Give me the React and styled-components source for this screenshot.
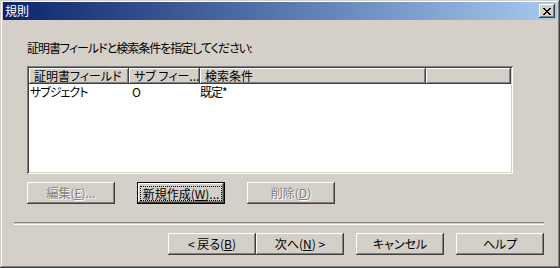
import styled, { createGlobalStyle } from "styled-components";

const GlobalStyle = createGlobalStyle`
  html, body {
    margin: 0;
    padding: 0;
    background: #d4d0c8;
  }
  body {
    font-family: "Noto Sans CJK JP", "Noto Sans", sans-serif;
    font-size: 12px;
    font-feature-settings: "palt";
  }
`;

const raised = `
  box-shadow: inset -1px -1px #404040, inset 1px 1px #ffffff,
    inset -2px -2px #808080, inset 2px 2px #d4d0c8;
`;

const Window = styled.div`
  width: 560px;
  height: 268px;
  box-sizing: border-box;
  padding: 2px 3px 3px 3px;
  background: #d4d0c8;
  box-shadow: inset -1px -1px #404040, inset 1px 1px #d4d0c8,
    inset -2px -2px #808080, inset 2px 2px #ffffff;
  display: flex;
  flex-direction: column;
  color: #000;
`;

const TitleBar = styled.div`
  height: 18px;
  display: flex;
  align-items: center;
  justify-content: space-between;
  padding: 0 2px 0 2px;
  background: linear-gradient(to right, #0a246a, #a6caf0);
  color: #fff;
  line-height: 18px;
`;

const CloseBox = styled.div`
  width: 16px;
  height: 14px;
  background: #d4d0c8;
  display: flex;
  align-items: center;
  justify-content: center;
  ${raised}
`;

const Content = styled.div`
  padding: 21px 13px 0 11px;
  display: flex;
  flex-direction: column;
`;

const Section = styled.div`
  padding-left: 13px;
  display: flex;
  flex-direction: column;
`;

const Label = styled.div`
  line-height: 14px;
  height: 14px;
  letter-spacing: -1px;
`;

const ListView = styled.div`
  margin-top: 11px;
  width: 486px;
  height: 108px;
  box-sizing: border-box;
  padding: 2px;
  background: #fff;
  box-shadow: inset 1px 1px #808080, inset -1px -1px #ffffff,
    inset 2px 2px #404040, inset -2px -2px #d4d0c8;
`;

const HeaderRow = styled.div`
  display: flex;
  height: 16px;
`;

const HeaderCell = styled.div`
  width: ${(p) => p.$w}px;
  flex: none;
  box-sizing: border-box;
  height: 16px;
  line-height: 16px;
  padding-left: 5px;
  background: #d4d0c8;
  white-space: nowrap;
  ${raised}
`;

const Row = styled.div`
  display: flex;
  height: 14px;
  line-height: 14px;
  margin-top: 1px;
`;

const Cell = styled.div`
  width: ${(p) => p.$w}px;
  flex: none;
  box-sizing: border-box;
  padding-left: ${(p) => p.$pad}px;
  white-space: nowrap;
  letter-spacing: -1px;
`;

const ActionRow = styled.div`
  margin-top: 8px;
  display: flex;
  gap: 22px;
`;

const Button = styled.div`
  width: ${(p) => p.$w || 88}px;
  height: 22px;
  box-sizing: border-box;
  background: #d4d0c8;
  display: flex;
  align-items: center;
  justify-content: center;
  line-height: 14px;
  white-space: nowrap;
  color: ${(p) => (p.$disabled ? "#808080" : "#000")};
  text-shadow: ${(p) => (p.$disabled ? "1px 1px #ffffff" : "none")};
  ${(p) =>
    p.$default
      ? `border: 1px solid #000;
         box-shadow: inset -1px -1px #404040, inset 1px 1px #ffffff,
           inset -2px -2px #808080;`
      : raised}
`;

const FocusRing = styled.span`
  display: inline-block;
  padding: 0 2px;
  border: 1px dotted #000;
  line-height: 13px;
`;

const Separator = styled.div`
  margin-top: 18px;
  height: 1px;
  border-top: 1px solid #808080;
  border-bottom: 1px solid #ffffff;
`;

const Footer = styled.div`
  margin-top: 8px;
  display: flex;
  justify-content: flex-end;
`;

const Spacer = styled.div`
  width: 12px;
  flex: none;
`;

const CloseIcon = () => (
  <svg width="8" height="7" viewBox="0 0 8 7">
    <path d="M0 0h2v1h1v1h2V1h1V0h2v1H7v1H6v1H5v1h1v1h1v1h1v1H6V6H5V5H3v1H2v1H0V6h1V5h1V4h1V3H2V2H1V1H0z" fill="#000" />
  </svg>
);

export default function App() {
  return (
    <>
      <GlobalStyle />
      <Window>
        <TitleBar>
          <span>規則</span>
          <CloseBox>
            <CloseIcon />
          </CloseBox>
        </TitleBar>
        <Content>
          <Section>
            <Label>証明書フィールドと検索条件を指定してください:</Label>
            <ListView>
              <HeaderRow>
                <HeaderCell $w={100}>証明書フィールド</HeaderCell>
                <HeaderCell $w={71}>サブ フィー...</HeaderCell>
                <HeaderCell $w={226}>検索条件</HeaderCell>
                <HeaderCell $w={85}></HeaderCell>
              </HeaderRow>
              <Row>
                <Cell $w={100} $pad={1}>サブジェクト</Cell>
                <Cell $w={71} $pad={3}>O</Cell>
                <Cell $w={226} $pad={0}>既定*</Cell>
              </Row>
            </ListView>
            <ActionRow>
              <Button $disabled>
                編集(<u>E</u>)...
              </Button>
              <Button $default>
                <FocusRing>
                  新規作成(<u>W</u>)...
                </FocusRing>
              </Button>
              <Button $disabled>
                削除(<u>D</u>)
              </Button>
            </ActionRow>
          </Section>
          <Separator />
          <Footer>
            <Button>
              &lt; 戻る(<u>B</u>)
            </Button>
            <Button>
              次へ(<u>N</u>) &gt;
            </Button>
            <Spacer />
            <Button>キャンセル</Button>
            <Spacer />
            <Button>ヘルプ</Button>
          </Footer>
        </Content>
      </Window>
    </>
  );
}
